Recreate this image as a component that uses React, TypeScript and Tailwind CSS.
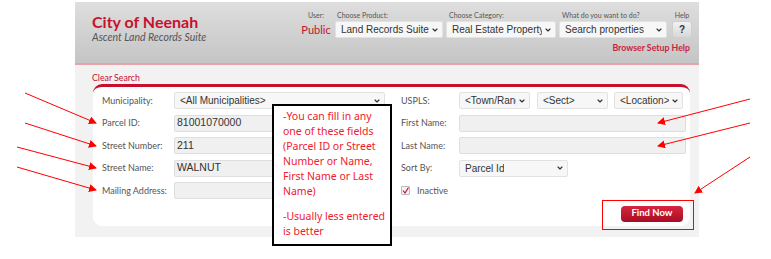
import { ChevronDown } from "lucide-react"

const lato = { fontFamily: "Lato, 'Open Sans', sans-serif" }

function Select({ value, className = "" }: { value: string; className?: string }) {
  return (
    <div
      className={`h-[17px] flex items-center justify-between rounded-[2px] border border-[#e2e2e2] bg-[#f7f7f7] pl-[5px] pr-[3px] text-[10px] text-[#333] overflow-hidden whitespace-nowrap font-['Liberation_Sans',Arial,sans-serif] ${className}`}
    >
      <span className="overflow-hidden">{value}</span>
      <ChevronDown className="w-[8px] h-[8px] shrink-0 ml-[2px] text-[#333]" strokeWidth={3.5} />
    </div>
  )
}

function Input({ value = "", className = "" }: { value?: string; className?: string }) {
  return (
    <div
      className={`h-[17px] flex items-center rounded-[2px] border border-[#dedede] bg-[#f0f0f0] pl-[2px] text-[10.5px] text-[#333] font-['Liberation_Sans',Arial,sans-serif] ${className}`}
    >
      {value}
    </div>
  )
}

function Label({ children, className = "" }: { children: React.ReactNode; className?: string }) {
  return (
    <div style={lato} className={`whitespace-nowrap text-[#555] ${className}`}>
      {children}
    </div>
  )
}

function Arrows() {
  const lines = [
    [25, 93, 96, 123],
    [25, 123, 96, 146],
    [17, 147, 96, 168],
    [17, 167, 96, 190],
    [750, 99, 658, 123],
    [750, 123, 658, 146],
    [750, 157, 695, 193],
  ]
  return (
    <svg className="absolute inset-0 pointer-events-none" width={771} height={259}>
      <defs>
        <marker id="ah" markerWidth="8" markerHeight="8" refX="7" refY="4" orient="auto" markerUnits="userSpaceOnUse">
          <path d="M0,0 L8,4 L0,8 z" fill="#ff0000" />
        </marker>
      </defs>
      {lines.map(([x1, y1, x2, y2], i) => (
        <line key={i} x1={x1} y1={y1} x2={x2} y2={y2} stroke="#ff0000" strokeWidth={1} markerEnd="url(#ah)" />
      ))}
    </svg>
  )
}

export default function App() {
  return (
    <div className="relative w-[771px] h-[259px] bg-white overflow-hidden">
      <div className="ml-[75px] w-[624px] pt-[2px]">
        {/* Header */}
        <div className="h-[63px] bg-gradient-to-b from-[#dedede] to-[#c5c5c5] border-b-2 border-[#e7a3ab] flex">
          <div className="pl-[17px] pt-[10px] w-[222px]">
            <div style={lato} className="text-[16px] leading-[19px] font-bold text-[#c8102e]">City of Neenah</div>
            <div style={lato} className="text-[10.5px] leading-[13px] italic text-[#555]">Ascent Land Records Suite</div>
          </div>
          <div className="flex flex-col">
            <div className="flex pt-[8px]">
              <div className="w-[38px] flex flex-col items-center">
                <Label className="text-[7px] leading-[10px] text-[#444]">User:</Label>
                <div style={lato} className="text-[11px] leading-[17px] text-[#c8102e] mt-[1px]">Public</div>
              </div>
              <div className="flex flex-col w-[108px]">
                <Label className="text-[7px] leading-[10px] text-[#444] pl-[2px]">Choose Product:</Label>
                <Select value="Land Records Suite" className="w-[108px] mt-[1px]" />
              </div>
              <div className="flex flex-col w-[110px] ml-[3px]">
                <Label className="text-[7px] leading-[10px] text-[#444] pl-[3px]">Choose Category:</Label>
                <Select value="Real Estate Property" className="w-[110px] mt-[1px]" />
              </div>
              <div className="flex flex-col w-[108px] ml-[3px]">
                <Label className="text-[7px] leading-[10px] text-[#444] pl-[3px]">What do you want to do?</Label>
                <Select value="Search properties" className="w-[108px] mt-[1px]" />
              </div>
              <div className="flex flex-col items-center w-[20px] ml-[5px]">
                <Label className="text-[7px] leading-[10px] text-[#444]">Help</Label>
                <div className="w-[20px] h-[17px] mt-[1px] rounded-[3px] bg-gradient-to-b from-[#f2f2f2] to-[#d8d8d8] border border-[#cfcfcf] flex items-center justify-center text-[10px] font-bold text-[#333] font-['Liberation_Sans',Arial,sans-serif]">
                  ?
                </div>
              </div>
            </div>
            <div style={lato} className="text-right text-[8.75px] leading-[12px] font-bold text-[#c8243e] mt-[4px] pr-[2px]">
              Browser Setup Help
            </div>
          </div>
        </div>

        {/* Search area */}
        <div className="bg-[#f2f2f2] h-[172px] pt-[7px] pl-[17px] pr-[9px]">
          <div style={lato} className="text-[8.75px] leading-[11px] text-[#c8102e]">Clear Search</div>
          <div className="mt-[1px] h-[142px] bg-white rounded-t-[9px] rounded-b-[9px] border-t-[3px] border-[#c8102e] ml-[1px] flex pl-[9px] pt-[5px]">
            {/* left column */}
            <div className="w-[299px] flex flex-col gap-[5.5px]">
              <div className="flex items-center">
                <Label className="w-[72px] text-[9px]">Municipality:</Label>
                <Select value="<All Municipalities>" className="w-[211px] text-[10.5px]" />
              </div>
              <div className="flex items-center">
                <Label className="w-[72px] text-[9px]">Parcel ID:</Label>
                <Input value="81001070000" className="w-[211px]" />
              </div>
              <div className="flex items-center">
                <Label className="w-[72px] text-[9px]">Street Number:</Label>
                <Input value="211" className="w-[211px]" />
              </div>
              <div className="flex items-center">
                <Label className="w-[72px] text-[9px]">Street Name:</Label>
                <Input value="WALNUT" className="w-[211px]" />
              </div>
              <div className="flex items-center">
                <Label className="w-[72px] text-[9px]">Mailing Address:</Label>
                <Input className="w-[211px]" />
              </div>
            </div>
            {/* right column */}
            <div className="flex flex-col gap-[5.5px]">
              <div className="flex items-center">
                <Label className="w-[58px] text-[9px]">USPLS:</Label>
                <Select value="<Town/Range>" className="w-[71px]" />
                <Select value="<Sect>" className="w-[71px] ml-[7px]" />
                <Select value="<Location>" className="w-[69px] ml-[6px]" />
              </div>
              <div className="flex items-center">
                <Label className="w-[58px] text-[9px]">First Name:</Label>
                <Input className="w-[227px]" />
              </div>
              <div className="flex items-center">
                <Label className="w-[58px] text-[9px]">Last Name:</Label>
                <Input className="w-[227px]" />
              </div>
              <div className="flex items-center">
                <Label className="w-[58px] text-[9px]">Sort By:</Label>
                <Select value="Parcel Id" className="w-[109px] text-[10.5px]" />
              </div>
              <div className="flex items-center h-[17px]">
                <div className="w-[9px] h-[9px] border border-[#bbb] bg-[#f4f4f4] rounded-[1px] flex items-center justify-center">
                  <svg width="7" height="7" viewBox="0 0 7 7">
                    <path d="M1 3.5 L3 6 L6.5 0.5" stroke="#c8102e" strokeWidth="1.2" fill="none" />
                  </svg>
                </div>
                <Label className="ml-[7px] text-[9px]">Inactive</Label>
              </div>
              <div className="flex justify-end pr-[3px] mt-[1px]">
                <div
                  style={lato}
                  className="w-[62px] h-[16px] rounded-[4px] bg-gradient-to-b from-[#d8253f] to-[#a80c22] text-white text-[9.5px] font-bold flex items-center justify-center"
                >
                  Find Now
                </div>
              </div>
            </div>
          </div>
        </div>
      </div>

      {/* annotation box */}
      <div className="absolute left-[272px] top-[104px] w-[120px] h-[142px] border-2 border-black bg-white pl-[9px] pt-[3px] text-[#f0202a] text-[10.5px] leading-[15px] font-['Noto_Sans',sans-serif] whitespace-nowrap">
        <div>-You can fill in any</div>
        <div>one of these fields</div>
        <div>(Parcel ID or Street</div>
        <div>Number or Name,</div>
        <div>First Name or Last</div>
        <div>Name)</div>
        <div className="mt-[10px]">-Usually less entered</div>
        <div>is better</div>
      </div>

      {/* red outline around Find Now */}
      <div className="absolute left-[602px] top-[200px] w-[92px] h-[30px] border border-[#ff0000]" />

      <Arrows />
    </div>
  )
}
